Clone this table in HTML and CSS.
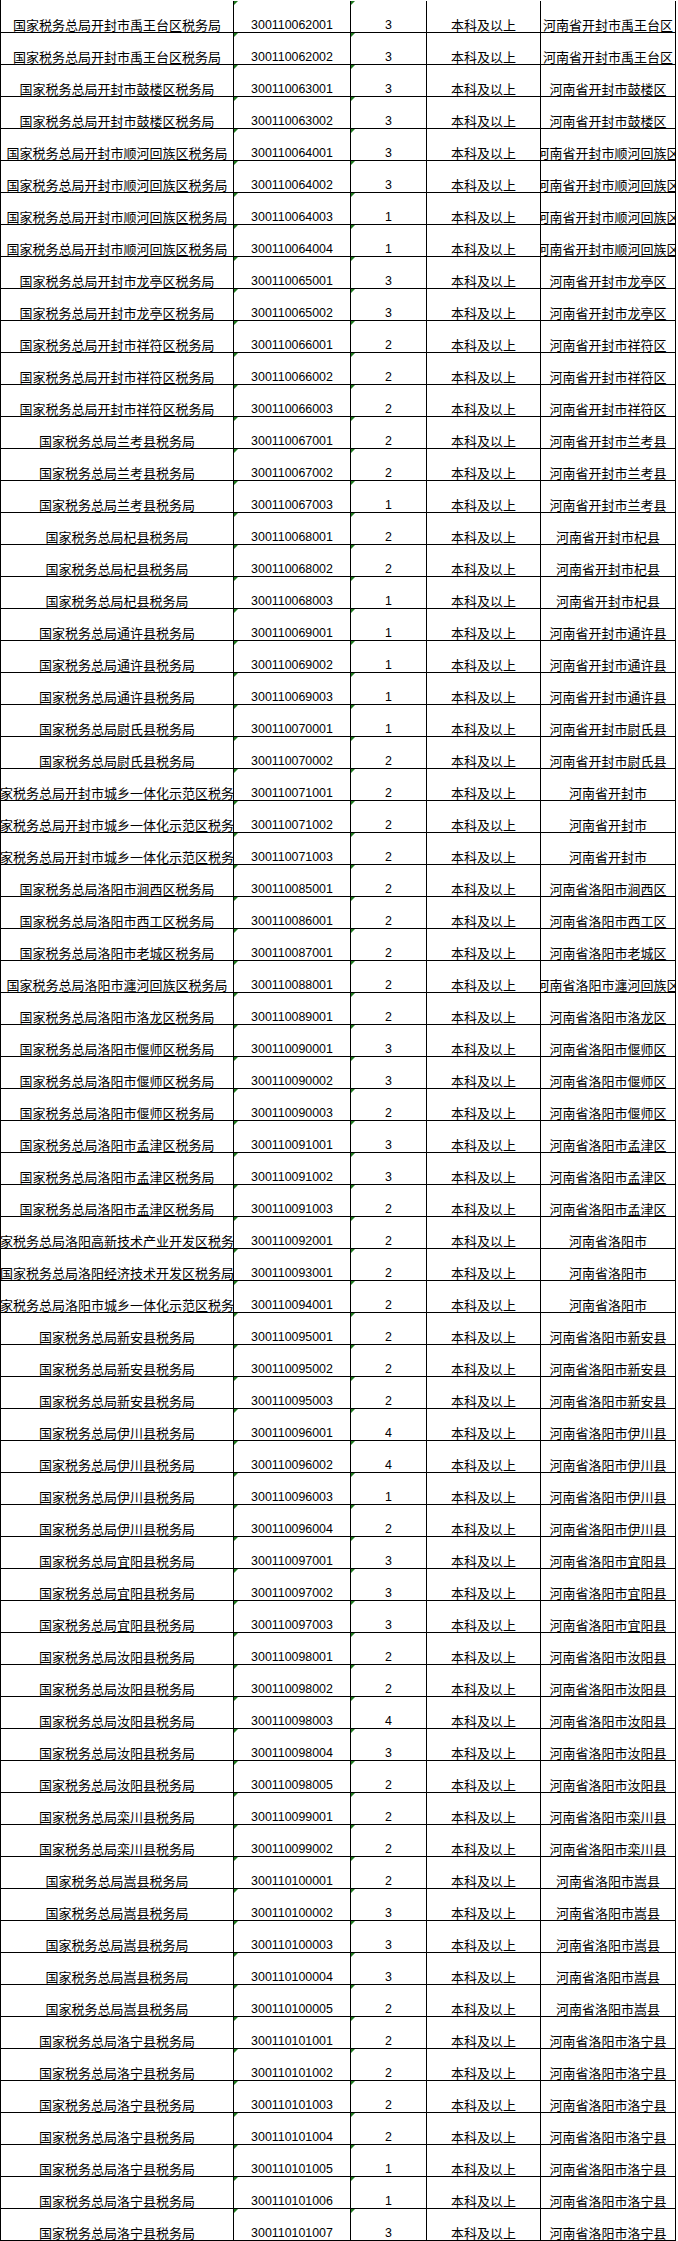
FILE: index.html
```html
<!DOCTYPE html>
<html lang="zh-CN">
<head>
<meta charset="utf-8">
<title>职位表</title>
<link rel="stylesheet" href="styles.css">
</head>
<body>
<div class="sheet">
<div class="c t"><span>国家税务总局开封市禹王台区税务局</span></div><div class="c n g"><span>300110062001</span></div><div class="c n g"><span>3</span></div><div class="c t"><span>本科及以上</span></div><div class="c t"><span>河南省开封市禹王台区</span></div>
<div class="c t"><span>国家税务总局开封市禹王台区税务局</span></div><div class="c n g"><span>300110062002</span></div><div class="c n g"><span>3</span></div><div class="c t"><span>本科及以上</span></div><div class="c t"><span>河南省开封市禹王台区</span></div>
<div class="c t"><span>国家税务总局开封市鼓楼区税务局</span></div><div class="c n g"><span>300110063001</span></div><div class="c n g"><span>3</span></div><div class="c t"><span>本科及以上</span></div><div class="c t"><span>河南省开封市鼓楼区</span></div>
<div class="c t"><span>国家税务总局开封市鼓楼区税务局</span></div><div class="c n g"><span>300110063002</span></div><div class="c n g"><span>3</span></div><div class="c t"><span>本科及以上</span></div><div class="c t"><span>河南省开封市鼓楼区</span></div>
<div class="c t"><span>国家税务总局开封市顺河回族区税务局</span></div><div class="c n g"><span>300110064001</span></div><div class="c n g"><span>3</span></div><div class="c t"><span>本科及以上</span></div><div class="c t"><span>河南省开封市顺河回族区</span></div>
<div class="c t"><span>国家税务总局开封市顺河回族区税务局</span></div><div class="c n g"><span>300110064002</span></div><div class="c n g"><span>3</span></div><div class="c t"><span>本科及以上</span></div><div class="c t"><span>河南省开封市顺河回族区</span></div>
<div class="c t"><span>国家税务总局开封市顺河回族区税务局</span></div><div class="c n g"><span>300110064003</span></div><div class="c n g"><span>1</span></div><div class="c t"><span>本科及以上</span></div><div class="c t"><span>河南省开封市顺河回族区</span></div>
<div class="c t"><span>国家税务总局开封市顺河回族区税务局</span></div><div class="c n g"><span>300110064004</span></div><div class="c n g"><span>1</span></div><div class="c t"><span>本科及以上</span></div><div class="c t"><span>河南省开封市顺河回族区</span></div>
<div class="c t"><span>国家税务总局开封市龙亭区税务局</span></div><div class="c n g"><span>300110065001</span></div><div class="c n g"><span>3</span></div><div class="c t"><span>本科及以上</span></div><div class="c t"><span>河南省开封市龙亭区</span></div>
<div class="c t"><span>国家税务总局开封市龙亭区税务局</span></div><div class="c n g"><span>300110065002</span></div><div class="c n g"><span>3</span></div><div class="c t"><span>本科及以上</span></div><div class="c t"><span>河南省开封市龙亭区</span></div>
<div class="c t"><span>国家税务总局开封市祥符区税务局</span></div><div class="c n g"><span>300110066001</span></div><div class="c n g"><span>2</span></div><div class="c t"><span>本科及以上</span></div><div class="c t"><span>河南省开封市祥符区</span></div>
<div class="c t"><span>国家税务总局开封市祥符区税务局</span></div><div class="c n g"><span>300110066002</span></div><div class="c n g"><span>2</span></div><div class="c t"><span>本科及以上</span></div><div class="c t"><span>河南省开封市祥符区</span></div>
<div class="c t"><span>国家税务总局开封市祥符区税务局</span></div><div class="c n g"><span>300110066003</span></div><div class="c n g"><span>2</span></div><div class="c t"><span>本科及以上</span></div><div class="c t"><span>河南省开封市祥符区</span></div>
<div class="c t"><span>国家税务总局兰考县税务局</span></div><div class="c n g"><span>300110067001</span></div><div class="c n g"><span>2</span></div><div class="c t"><span>本科及以上</span></div><div class="c t"><span>河南省开封市兰考县</span></div>
<div class="c t"><span>国家税务总局兰考县税务局</span></div><div class="c n g"><span>300110067002</span></div><div class="c n g"><span>2</span></div><div class="c t"><span>本科及以上</span></div><div class="c t"><span>河南省开封市兰考县</span></div>
<div class="c t"><span>国家税务总局兰考县税务局</span></div><div class="c n g"><span>300110067003</span></div><div class="c n g"><span>1</span></div><div class="c t"><span>本科及以上</span></div><div class="c t"><span>河南省开封市兰考县</span></div>
<div class="c t"><span>国家税务总局杞县税务局</span></div><div class="c n g"><span>300110068001</span></div><div class="c n g"><span>2</span></div><div class="c t"><span>本科及以上</span></div><div class="c t"><span>河南省开封市杞县</span></div>
<div class="c t"><span>国家税务总局杞县税务局</span></div><div class="c n g"><span>300110068002</span></div><div class="c n g"><span>2</span></div><div class="c t"><span>本科及以上</span></div><div class="c t"><span>河南省开封市杞县</span></div>
<div class="c t"><span>国家税务总局杞县税务局</span></div><div class="c n g"><span>300110068003</span></div><div class="c n g"><span>1</span></div><div class="c t"><span>本科及以上</span></div><div class="c t"><span>河南省开封市杞县</span></div>
<div class="c t"><span>国家税务总局通许县税务局</span></div><div class="c n g"><span>300110069001</span></div><div class="c n g"><span>1</span></div><div class="c t"><span>本科及以上</span></div><div class="c t"><span>河南省开封市通许县</span></div>
<div class="c t"><span>国家税务总局通许县税务局</span></div><div class="c n g"><span>300110069002</span></div><div class="c n g"><span>1</span></div><div class="c t"><span>本科及以上</span></div><div class="c t"><span>河南省开封市通许县</span></div>
<div class="c t"><span>国家税务总局通许县税务局</span></div><div class="c n g"><span>300110069003</span></div><div class="c n g"><span>1</span></div><div class="c t"><span>本科及以上</span></div><div class="c t"><span>河南省开封市通许县</span></div>
<div class="c t"><span>国家税务总局尉氏县税务局</span></div><div class="c n g"><span>300110070001</span></div><div class="c n g"><span>1</span></div><div class="c t"><span>本科及以上</span></div><div class="c t"><span>河南省开封市尉氏县</span></div>
<div class="c t"><span>国家税务总局尉氏县税务局</span></div><div class="c n g"><span>300110070002</span></div><div class="c n g"><span>2</span></div><div class="c t"><span>本科及以上</span></div><div class="c t"><span>河南省开封市尉氏县</span></div>
<div class="c t"><span>国家税务总局开封市城乡一体化示范区税务局</span></div><div class="c n g"><span>300110071001</span></div><div class="c n g"><span>2</span></div><div class="c t"><span>本科及以上</span></div><div class="c t"><span>河南省开封市</span></div>
<div class="c t"><span>国家税务总局开封市城乡一体化示范区税务局</span></div><div class="c n g"><span>300110071002</span></div><div class="c n g"><span>2</span></div><div class="c t"><span>本科及以上</span></div><div class="c t"><span>河南省开封市</span></div>
<div class="c t"><span>国家税务总局开封市城乡一体化示范区税务局</span></div><div class="c n g"><span>300110071003</span></div><div class="c n g"><span>2</span></div><div class="c t"><span>本科及以上</span></div><div class="c t"><span>河南省开封市</span></div>
<div class="c t"><span>国家税务总局洛阳市涧西区税务局</span></div><div class="c n g"><span>300110085001</span></div><div class="c n g"><span>2</span></div><div class="c t"><span>本科及以上</span></div><div class="c t"><span>河南省洛阳市涧西区</span></div>
<div class="c t"><span>国家税务总局洛阳市西工区税务局</span></div><div class="c n g"><span>300110086001</span></div><div class="c n g"><span>2</span></div><div class="c t"><span>本科及以上</span></div><div class="c t"><span>河南省洛阳市西工区</span></div>
<div class="c t"><span>国家税务总局洛阳市老城区税务局</span></div><div class="c n g"><span>300110087001</span></div><div class="c n g"><span>2</span></div><div class="c t"><span>本科及以上</span></div><div class="c t"><span>河南省洛阳市老城区</span></div>
<div class="c t"><span>国家税务总局洛阳市瀍河回族区税务局</span></div><div class="c n g"><span>300110088001</span></div><div class="c n g"><span>2</span></div><div class="c t"><span>本科及以上</span></div><div class="c t"><span>河南省洛阳市瀍河回族区</span></div>
<div class="c t"><span>国家税务总局洛阳市洛龙区税务局</span></div><div class="c n g"><span>300110089001</span></div><div class="c n g"><span>2</span></div><div class="c t"><span>本科及以上</span></div><div class="c t"><span>河南省洛阳市洛龙区</span></div>
<div class="c t"><span>国家税务总局洛阳市偃师区税务局</span></div><div class="c n g"><span>300110090001</span></div><div class="c n g"><span>3</span></div><div class="c t"><span>本科及以上</span></div><div class="c t"><span>河南省洛阳市偃师区</span></div>
<div class="c t"><span>国家税务总局洛阳市偃师区税务局</span></div><div class="c n g"><span>300110090002</span></div><div class="c n g"><span>3</span></div><div class="c t"><span>本科及以上</span></div><div class="c t"><span>河南省洛阳市偃师区</span></div>
<div class="c t"><span>国家税务总局洛阳市偃师区税务局</span></div><div class="c n g"><span>300110090003</span></div><div class="c n g"><span>2</span></div><div class="c t"><span>本科及以上</span></div><div class="c t"><span>河南省洛阳市偃师区</span></div>
<div class="c t"><span>国家税务总局洛阳市孟津区税务局</span></div><div class="c n g"><span>300110091001</span></div><div class="c n g"><span>3</span></div><div class="c t"><span>本科及以上</span></div><div class="c t"><span>河南省洛阳市孟津区</span></div>
<div class="c t"><span>国家税务总局洛阳市孟津区税务局</span></div><div class="c n g"><span>300110091002</span></div><div class="c n g"><span>3</span></div><div class="c t"><span>本科及以上</span></div><div class="c t"><span>河南省洛阳市孟津区</span></div>
<div class="c t"><span>国家税务总局洛阳市孟津区税务局</span></div><div class="c n g"><span>300110091003</span></div><div class="c n g"><span>2</span></div><div class="c t"><span>本科及以上</span></div><div class="c t"><span>河南省洛阳市孟津区</span></div>
<div class="c t"><span>国家税务总局洛阳高新技术产业开发区税务局</span></div><div class="c n g"><span>300110092001</span></div><div class="c n g"><span>2</span></div><div class="c t"><span>本科及以上</span></div><div class="c t"><span>河南省洛阳市</span></div>
<div class="c t"><span>国家税务总局洛阳经济技术开发区税务局</span></div><div class="c n g"><span>300110093001</span></div><div class="c n g"><span>2</span></div><div class="c t"><span>本科及以上</span></div><div class="c t"><span>河南省洛阳市</span></div>
<div class="c t"><span>国家税务总局洛阳市城乡一体化示范区税务局</span></div><div class="c n g"><span>300110094001</span></div><div class="c n g"><span>2</span></div><div class="c t"><span>本科及以上</span></div><div class="c t"><span>河南省洛阳市</span></div>
<div class="c t"><span>国家税务总局新安县税务局</span></div><div class="c n g"><span>300110095001</span></div><div class="c n g"><span>2</span></div><div class="c t"><span>本科及以上</span></div><div class="c t"><span>河南省洛阳市新安县</span></div>
<div class="c t"><span>国家税务总局新安县税务局</span></div><div class="c n g"><span>300110095002</span></div><div class="c n g"><span>2</span></div><div class="c t"><span>本科及以上</span></div><div class="c t"><span>河南省洛阳市新安县</span></div>
<div class="c t"><span>国家税务总局新安县税务局</span></div><div class="c n g"><span>300110095003</span></div><div class="c n g"><span>2</span></div><div class="c t"><span>本科及以上</span></div><div class="c t"><span>河南省洛阳市新安县</span></div>
<div class="c t"><span>国家税务总局伊川县税务局</span></div><div class="c n g"><span>300110096001</span></div><div class="c n g"><span>4</span></div><div class="c t"><span>本科及以上</span></div><div class="c t"><span>河南省洛阳市伊川县</span></div>
<div class="c t"><span>国家税务总局伊川县税务局</span></div><div class="c n g"><span>300110096002</span></div><div class="c n g"><span>4</span></div><div class="c t"><span>本科及以上</span></div><div class="c t"><span>河南省洛阳市伊川县</span></div>
<div class="c t"><span>国家税务总局伊川县税务局</span></div><div class="c n g"><span>300110096003</span></div><div class="c n g"><span>1</span></div><div class="c t"><span>本科及以上</span></div><div class="c t"><span>河南省洛阳市伊川县</span></div>
<div class="c t"><span>国家税务总局伊川县税务局</span></div><div class="c n g"><span>300110096004</span></div><div class="c n g"><span>2</span></div><div class="c t"><span>本科及以上</span></div><div class="c t"><span>河南省洛阳市伊川县</span></div>
<div class="c t"><span>国家税务总局宜阳县税务局</span></div><div class="c n g"><span>300110097001</span></div><div class="c n g"><span>3</span></div><div class="c t"><span>本科及以上</span></div><div class="c t"><span>河南省洛阳市宜阳县</span></div>
<div class="c t"><span>国家税务总局宜阳县税务局</span></div><div class="c n g"><span>300110097002</span></div><div class="c n g"><span>3</span></div><div class="c t"><span>本科及以上</span></div><div class="c t"><span>河南省洛阳市宜阳县</span></div>
<div class="c t"><span>国家税务总局宜阳县税务局</span></div><div class="c n g"><span>300110097003</span></div><div class="c n g"><span>3</span></div><div class="c t"><span>本科及以上</span></div><div class="c t"><span>河南省洛阳市宜阳县</span></div>
<div class="c t"><span>国家税务总局汝阳县税务局</span></div><div class="c n g"><span>300110098001</span></div><div class="c n g"><span>2</span></div><div class="c t"><span>本科及以上</span></div><div class="c t"><span>河南省洛阳市汝阳县</span></div>
<div class="c t"><span>国家税务总局汝阳县税务局</span></div><div class="c n g"><span>300110098002</span></div><div class="c n g"><span>2</span></div><div class="c t"><span>本科及以上</span></div><div class="c t"><span>河南省洛阳市汝阳县</span></div>
<div class="c t"><span>国家税务总局汝阳县税务局</span></div><div class="c n g"><span>300110098003</span></div><div class="c n g"><span>4</span></div><div class="c t"><span>本科及以上</span></div><div class="c t"><span>河南省洛阳市汝阳县</span></div>
<div class="c t"><span>国家税务总局汝阳县税务局</span></div><div class="c n g"><span>300110098004</span></div><div class="c n g"><span>3</span></div><div class="c t"><span>本科及以上</span></div><div class="c t"><span>河南省洛阳市汝阳县</span></div>
<div class="c t"><span>国家税务总局汝阳县税务局</span></div><div class="c n g"><span>300110098005</span></div><div class="c n g"><span>2</span></div><div class="c t"><span>本科及以上</span></div><div class="c t"><span>河南省洛阳市汝阳县</span></div>
<div class="c t"><span>国家税务总局栾川县税务局</span></div><div class="c n g"><span>300110099001</span></div><div class="c n g"><span>2</span></div><div class="c t"><span>本科及以上</span></div><div class="c t"><span>河南省洛阳市栾川县</span></div>
<div class="c t"><span>国家税务总局栾川县税务局</span></div><div class="c n g"><span>300110099002</span></div><div class="c n g"><span>2</span></div><div class="c t"><span>本科及以上</span></div><div class="c t"><span>河南省洛阳市栾川县</span></div>
<div class="c t"><span>国家税务总局嵩县税务局</span></div><div class="c n g"><span>300110100001</span></div><div class="c n g"><span>2</span></div><div class="c t"><span>本科及以上</span></div><div class="c t"><span>河南省洛阳市嵩县</span></div>
<div class="c t"><span>国家税务总局嵩县税务局</span></div><div class="c n g"><span>300110100002</span></div><div class="c n g"><span>3</span></div><div class="c t"><span>本科及以上</span></div><div class="c t"><span>河南省洛阳市嵩县</span></div>
<div class="c t"><span>国家税务总局嵩县税务局</span></div><div class="c n g"><span>300110100003</span></div><div class="c n g"><span>3</span></div><div class="c t"><span>本科及以上</span></div><div class="c t"><span>河南省洛阳市嵩县</span></div>
<div class="c t"><span>国家税务总局嵩县税务局</span></div><div class="c n g"><span>300110100004</span></div><div class="c n g"><span>3</span></div><div class="c t"><span>本科及以上</span></div><div class="c t"><span>河南省洛阳市嵩县</span></div>
<div class="c t"><span>国家税务总局嵩县税务局</span></div><div class="c n g"><span>300110100005</span></div><div class="c n g"><span>2</span></div><div class="c t"><span>本科及以上</span></div><div class="c t"><span>河南省洛阳市嵩县</span></div>
<div class="c t"><span>国家税务总局洛宁县税务局</span></div><div class="c n g"><span>300110101001</span></div><div class="c n g"><span>2</span></div><div class="c t"><span>本科及以上</span></div><div class="c t"><span>河南省洛阳市洛宁县</span></div>
<div class="c t"><span>国家税务总局洛宁县税务局</span></div><div class="c n g"><span>300110101002</span></div><div class="c n g"><span>2</span></div><div class="c t"><span>本科及以上</span></div><div class="c t"><span>河南省洛阳市洛宁县</span></div>
<div class="c t"><span>国家税务总局洛宁县税务局</span></div><div class="c n g"><span>300110101003</span></div><div class="c n g"><span>2</span></div><div class="c t"><span>本科及以上</span></div><div class="c t"><span>河南省洛阳市洛宁县</span></div>
<div class="c t"><span>国家税务总局洛宁县税务局</span></div><div class="c n g"><span>300110101004</span></div><div class="c n g"><span>2</span></div><div class="c t"><span>本科及以上</span></div><div class="c t"><span>河南省洛阳市洛宁县</span></div>
<div class="c t"><span>国家税务总局洛宁县税务局</span></div><div class="c n g"><span>300110101005</span></div><div class="c n g"><span>1</span></div><div class="c t"><span>本科及以上</span></div><div class="c t"><span>河南省洛阳市洛宁县</span></div>
<div class="c t"><span>国家税务总局洛宁县税务局</span></div><div class="c n g"><span>300110101006</span></div><div class="c n g"><span>1</span></div><div class="c t"><span>本科及以上</span></div><div class="c t"><span>河南省洛阳市洛宁县</span></div>
<div class="c t"><span>国家税务总局洛宁县税务局</span></div><div class="c n g"><span>300110101007</span></div><div class="c n g"><span>3</span></div><div class="c t"><span>本科及以上</span></div><div class="c t"><span>河南省洛阳市洛宁县</span></div>
</div>
</body>
</html>
```

FILE: styles.css
```css
html, body {
  margin: 0;
  padding: 0;
  background: #ffffff;
}

.sheet {
  display: grid;
  grid-template-columns: 233px 117px 76px 114px 135px;
  grid-auto-rows: 32px;
  width: 675px;
  padding-top: 1px;
  border-left: 1px solid #000;
  color: #000;
}

.c {
  position: relative;
  box-sizing: border-box;
  border-right: 1px solid #000;
  border-bottom: 1px solid #000;
  display: flex;
  justify-content: center;
  align-items: flex-end;
  overflow: hidden;
  white-space: nowrap;
}

.t {
  font-family: "Noto Sans CJK SC", sans-serif;
  font-size: 13px;
  line-height: 13px;
  padding-bottom: 1.5px;
}

.n {
  font-family: "Liberation Sans", Arial, sans-serif;
  font-size: 12.4px;
  line-height: 13px;
  padding-bottom: 0.5px;
}

.c span {
  flex: none;
}

.g::before {
  content: "";
  position: absolute;
  left: 0;
  top: 0;
  width: 0;
  height: 0;
  border-top: 4px solid #1f7a1f;
  border-right: 4px solid transparent;
}
```
